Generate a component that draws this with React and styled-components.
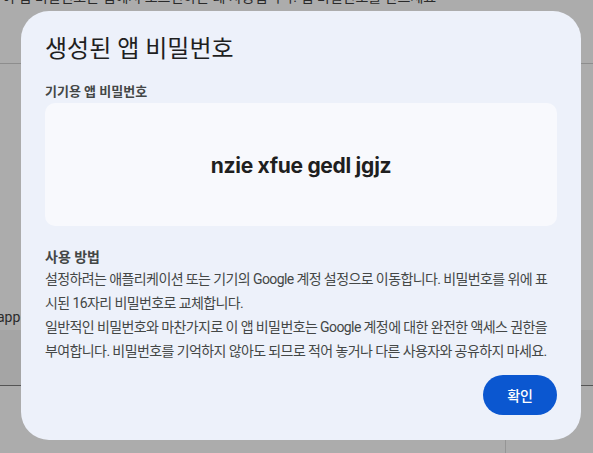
import React from "react";
import styled, { createGlobalStyle } from "styled-components";

const GlobalStyle = createGlobalStyle`
  html, body {
    margin: 0;
    padding: 0;
    background: #acacac;
    font-family: Roboto, "Noto Sans CJK KR", sans-serif;
  }
  * { box-sizing: border-box; }
`;

const Page = styled.div`
  width: 593px;
  height: 453px;
  overflow: hidden;
  background: #acacac;
  display: flex;
  flex-direction: column;
`;

const CutText = styled.div`
  height: 4px;
  display: flex;
  align-items: flex-end;
  overflow: hidden;
  padding-left: 2px;
  color: #2a2a2a;
  font-size: 14px;
  line-height: 14px;
  white-space: nowrap;
`;

const HeaderBar = styled.div`
  height: 60px;
  flex-shrink: 0;
  border-bottom: 1px solid #8d8d8d;
`;

const Gap = styled.div`
  height: ${(p) => p.$h}px;
  flex-shrink: 0;
`;

const SideText = styled.div`
  height: 26px;
  flex-shrink: 0;
  display: flex;
  align-items: center;
  margin-left: -3px;
  color: #2b2b2b;
  font-size: 14px;
`;

const Band = styled.div`
  height: 56px;
  flex-shrink: 0;
  background: #a5a5a5;
  border-bottom: 1px solid #555;
`;

const Bottom = styled.div`
  flex: 1;
  display: flex;
  justify-content: flex-end;
  padding-right: 87px;
`;

const VRule = styled.div`
  width: 1px;
  background: #959595;
`;

const Overlay = styled.div`
  position: fixed;
  inset: 0;
  padding: 11px 0 0 21px;
`;

const Dialog = styled.div`
  width: 560px;
  height: 429px;
  background: #edf1fa;
  border-radius: 28px;
  padding: 22px 24px 25px;
  display: flex;
  flex-direction: column;
`;

const Title = styled.h1`
  margin: 0 0 17px;
  font-size: 24px;
  line-height: 32px;
  font-weight: 400;
  color: #1f1f1f;
`;

const Label = styled.div`
  font-size: 13px;
  line-height: 20px;
  font-weight: 600;
  color: #444746;
  margin-bottom: 1px;
`;

const PasswordBox = styled.div`
  height: 123px;
  flex-shrink: 0;
  border-radius: 10px;
  background: #f8f9fd;
  display: flex;
  align-items: center;
  justify-content: center;
  padding-top: 2px;
`;

const Password = styled.span`
  font-family: Inter, "Noto Sans", sans-serif;
  font-size: 21px;
  font-weight: 700;
  letter-spacing: -0.3px;
  color: #1f1f1f;
`;

const HowTo = styled.div`
  margin-top: 21px;
  font-size: 14px;
  line-height: 20px;
  font-weight: 700;
  color: #444746;
`;

const Body = styled.p`
  margin: 0;
  font-size: 14px;
  line-height: 24px;
  letter-spacing: -0.6px;
  color: #444746;
`;

const Actions = styled.div`
  margin-top: auto;
  display: flex;
  justify-content: flex-end;
`;

const Button = styled.button`
  height: 40px;
  padding: 0 24px;
  border: none;
  border-radius: 20px;
  background: #0b57d0;
  color: #ffffff;
  font-family: Roboto, "Noto Sans CJK KR", sans-serif;
  font-size: 14px;
  font-weight: 500;
`;

export default function App() {
  return (
    <>
      <GlobalStyle />
      <Page>
        <CutText>이 앱 비밀번호는 앱에서 로그인하는 데 사용됩니다. 앱 비밀번호를 만드세요</CutText>
        <HeaderBar />
        <Gap $h={240} />
        <SideText>app</SideText>
        <Band />
        <Bottom>
          <VRule />
        </Bottom>
      </Page>
      <Overlay>
        <Dialog role="dialog">
          <Title>생성된 앱 비밀번호</Title>
          <Label>기기용 앱 비밀번호</Label>
          <PasswordBox>
            <Password>nzie xfue gedl jgjz</Password>
          </PasswordBox>
          <HowTo>사용 방법</HowTo>
          <Body>
            설정하려는 애플리케이션 또는 기기의 Google 계정 설정으로 이동합니다. 비밀번호를 위에 표시된 16자리 비밀번호로 교체합니다.
          </Body>
          <Body>
            일반적인 비밀번호와 마찬가지로 이 앱 비밀번호는 Google 계정에 대한 완전한 액세스 권한을 부여합니다. 비밀번호를 기억하지 않아도 되므로 적어 놓거나 다른 사용자와 공유하지 마세요.
          </Body>
          <Actions>
            <Button>확인</Button>
          </Actions>
        </Dialog>
      </Overlay>
    </>
  );
}
